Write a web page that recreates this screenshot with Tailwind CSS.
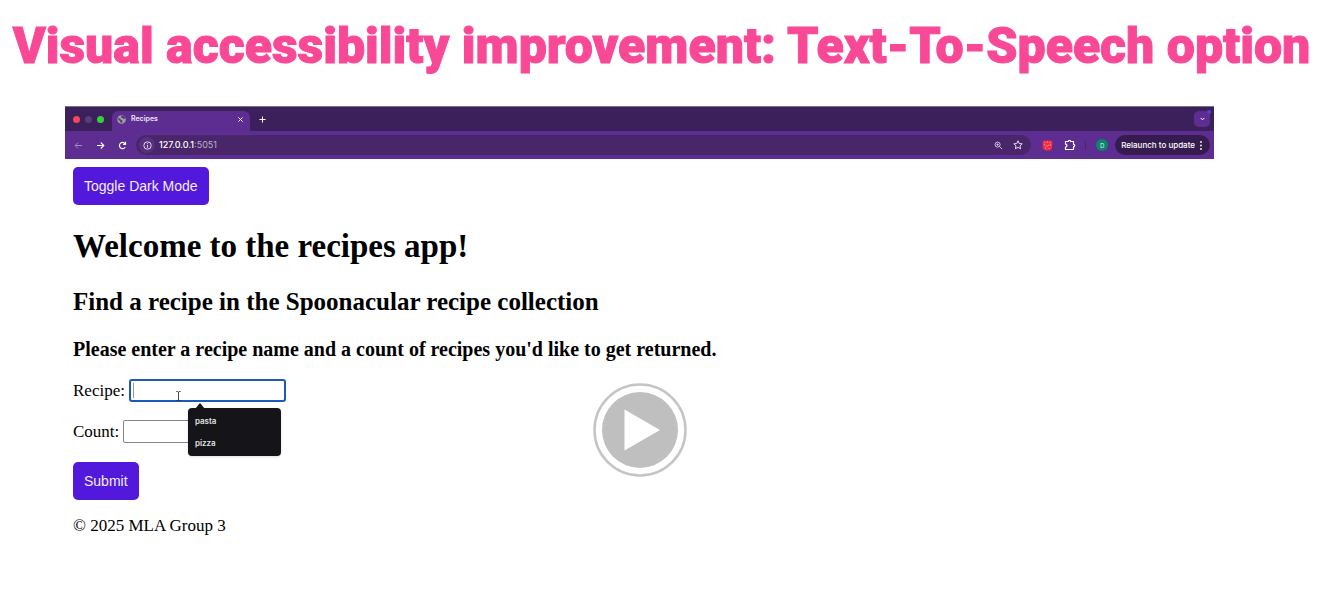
<!DOCTYPE html>
<html lang="en">
<head>
<meta charset="utf-8">
<meta name="viewport" content="width=device-width, initial-scale=1">
<title>Visual accessibility improvement</title>
<script src="https://cdn.jsdelivr.net/npm/@tailwindcss/browser@4"></script>
</head>
<body class="bg-white text-black">
<h1 class="pt-4 pr-1 text-center font-['Roboto',sans-serif] text-[50px] leading-[60px] font-black text-[#f94996] [-webkit-text-stroke:1px_#f94996]">Visual accessibility improvement: Text-To-Speech option</h1>

<main class="relative mt-[30px] mr-[113px] ml-[65px]">
  <header class="border-t border-[#777080] bg-[#3b205b] font-['Inter','Roboto',sans-serif] text-[8px] text-[#eee5f7]">
    <div class="flex h-6 items-center">
      <div class="flex w-[47px] gap-[5px] pl-2" aria-hidden="true">
        <span class="size-[7px] rounded-full bg-[#f6465a]"></span>
        <span class="size-[7px] rounded-full bg-[#5c3a7d]"></span>
        <span class="size-[7px] rounded-full bg-[#30d33e]"></span>
      </div>
      <div class="mt-1 flex h-5 w-[138px] items-center rounded-t-md bg-[#5e2d91] px-[5px] pb-[3px]">
        <svg class="size-[9px]" viewBox="0 0 18 18" fill="none"><circle cx="9" cy="9" r="8.5" fill="#a69bb0"/><path d="M2 6l4 1 2 3 3 1-1 5-3-1-1-3-3-2zM9 1l-1 4 3 1 2 2 4-1-3-5z" fill="#51425e"/></svg>
        <span class="ml-[5px] flex-1 text-[7px] font-semibold">Recipes</span>
        <button class="flex size-[9px] items-center justify-center" aria-label="Close tab"><svg class="size-[5px]" viewBox="0 0 6 6" stroke="#fff" stroke-width="1.2"><path d="M.5.5l5 5M5.5.5l-5 5"/></svg></button>
      </div>
      <button class="ml-2 flex size-[9px] items-center justify-center" aria-label="New tab"><svg class="size-[7px]" viewBox="0 0 8 8" stroke="#fff" stroke-width="1.2"><path d="M4 .5v7M.5 4h7"/></svg></button>
      <button class="relative mr-1 ml-auto flex size-4 items-center justify-center rounded-[5px] bg-[#5e2d91]" aria-label="Search tabs"><svg class="h-1 w-[5px]" viewBox="0 0 6 4" fill="none" stroke="#fff" stroke-width="1.2"><path d="M.7.7L3 3 5.3.7"/></svg><span class="absolute -top-px -right-px size-1 rounded-full bg-[#4745d7]"></span></button>
    </div>
    <div class="flex h-[28px] items-center bg-[#5e2d91]">
      <div class="flex w-[71px] gap-[13px] pl-[9px]">
        <button aria-label="Back"><svg class="size-[9px]" viewBox="0 0 9 9" fill="none" stroke="#a987c8"><path d="M8 4.500H1.200M4.200 1.500l-3 3 3 3"/></svg></button>
        <button aria-label="Forward"><svg class="size-[9px]" viewBox="0 0 9 9" fill="none" stroke="#fff" stroke-width="1.100"><path d="M1 4.500h6.800M4.800 1.500l3 3-3 3"/></svg></button>
        <button aria-label="Reload"><svg class="size-[9px]" viewBox="0 0 9 9" fill="none" stroke="#fff" stroke-width="1.200"><path d="M7.200 6.200A3.100 3.100 0 1 1 7 2.600M7.500.8v2.500H5"/></svg></button>
      </div>
      <div class="flex h-5 flex-1 items-center rounded-full bg-[#482669] pr-2 pl-[3px]">
        <span class="flex size-4 items-center justify-center rounded-full bg-[#592f7f]"><svg class="size-[9px]" viewBox="0 0 9 9" fill="none" stroke="#f1e6fa" stroke-width=".9"><circle cx="4.500" cy="4.500" r="3.700"/><path d="M4.500 4v2.700M4.500 2.200v1"/></svg></span>
        <span class="ml-1 flex-1 text-[9px] text-[#bfafd0]"><span class="font-medium text-white">127.0.0.1</span>:5051</span>
        <svg class="mr-[10px] size-[9px]" viewBox="0 0 10 10" fill="none" stroke="#ddd0e8"><circle cx="4" cy="4" r="2.800"/><path d="M6 6l3 3M2.700 4h2.600M4 2.700v2.600"/></svg>
        <button aria-label="Bookmark"><svg class="size-[10px]" viewBox="0 0 10 10" fill="none" stroke="#e5daef" stroke-linejoin="round"><path d="M5 .8l1.200 2.700 3 .3-2.200 2 .6 3L5 7.300 2.400 8.800l.6-3-2.200-2 3-.3z"/></svg></button>
      </div>
      <svg class="ml-[11px] size-[11px]" viewBox="0 0 11 11"><path d="M1.500.5h8l1 2-.5 6-2 2H3l-2-2-.5-6z" fill="#f02c4b"/><path d="M2.500 2.500h1M5 2h1M7.500 2.500h1M2 5h1M8 5h1M3 8h1M6.500 8.500h1M4 5.300l1.200 1.200 2-2" stroke="#ff9a86" fill="none"/></svg>
      <svg class="ml-[11px] size-[12px]" viewBox="0 0 12 12" fill="none" stroke="#fff" stroke-width="1.200" stroke-linejoin="round"><path d="M1.500 2.500h2.800a1.200 1.200 0 0 1 2.400 0h2.800v2.800a1.200 1.200 0 0 1 0 2.400v2.800h-8V8c2-.2 2-2.700 0-2.900z"/></svg>
      <span class="ml-[9px] h-[9px] w-px bg-[#4a276c]"></span>
      <span class="ml-[10px] flex size-3 items-center justify-center rounded-full bg-[#08876a] text-[6px]">D</span>
      <button class="mr-1 ml-[7px] flex h-5 items-center gap-[5px] rounded-full bg-[#361b4e] pr-2 pl-[6px] font-medium text-white">Relaunch to update<svg class="h-[9px] w-[2px]" viewBox="0 0 2 9" fill="#fff"><circle cx="1" cy="1" r=".9"/><circle cx="1" cy="4.500" r=".9"/><circle cx="1" cy="8" r=".9"/></svg></button>
    </div>
  </header>

  <div class="px-2 pt-2 font-['Liberation_Serif',serif] text-[17px] leading-5">
    <button class="block h-[38px] rounded-[5px] bg-[#5218dc] px-[11px] font-['Liberation_Sans',sans-serif] text-[14px] text-[#f4edff]">Toggle Dark Mode</button>
    <h2 class="mt-[21px] text-[33px] leading-10 font-bold">Welcome to the recipes app!</h2>
    <h3 class="mt-[21px] text-[25px] leading-[30px] font-bold">Find a recipe in the Spoonacular recipe collection</h3>
    <h4 class="mt-5 text-[20px] leading-6 font-bold">Please enter a recipe name and a count of recipes you'd like to get returned.</h4>
    <form>
      <div class="mt-[18px] flex items-center gap-1">
        <label for="recipe">Recipe:</label>
        <div class="relative">
          <input id="recipe" type="text" autocomplete="off" class="block h-[23px] w-[157px] rounded-[3px] border-2 border-[#1b59bd] bg-white px-1 outline-none">
          <span class="absolute top-1 left-1 h-[15px] w-px bg-[#999]"></span>
          <svg class="absolute top-3 left-[47px] h-[10px] w-[5px]" viewBox="0 0 5 10" fill="none" stroke="#333" stroke-width=".9"><path d="M.3.5h1.500l.7.700.7-.7h1.500M2.500 1v8M.3 9.500h1.500l.7-.7.7.7h1.500"/></svg>
          <div class="absolute top-[29px] left-[59px] z-10 h-[48px] w-[93px] rounded-[4px] bg-[#151419] px-[7px] pt-[2px] font-['Inter',sans-serif] text-[8px] font-semibold text-[#e4e4e6] shadow-sm">
            <svg class="absolute -top-[5px] left-[7px] h-[6px] w-[10px]" viewBox="0 0 10 6" fill="#151419"><path d="M0 6l5-6 5 6z"/></svg>
            <div class="h-[22px] leading-[22px]">pasta</div>
            <div class="h-[22px] leading-[22px]">pizza</div>
          </div>
        </div>
      </div>
      <div class="mt-[18px] flex items-center gap-1">
        <label for="count">Count:</label>
        <input id="count" type="text" class="block h-[23px] w-[154px] rounded-[2px] border border-[#858585] bg-white px-1">
      </div>
      <button type="button" class="mt-[19px] block h-[38px] rounded-[5px] bg-[#5218dc] px-[11px] font-['Liberation_Sans',sans-serif] text-[14px] text-[#f4edff]">Submit</button>
    </form>
    <footer class="mt-4">© 2025 MLA Group 3</footer>
  </div>

  <button class="absolute top-[276px] left-1/2 -translate-x-1/2" aria-label="Play video">
    <svg class="size-[96px]" viewBox="0 0 96 96"><circle cx="48" cy="48" r="45.500" fill="#fff" stroke="#c5c5c5" stroke-width="2.500"/><circle cx="48" cy="48" r="38" fill="#bfbfbf"/><path d="M32.500 27.500v41L68 48z" fill="#fff"/></svg>
  </button>
</main>
</body>
</html>
